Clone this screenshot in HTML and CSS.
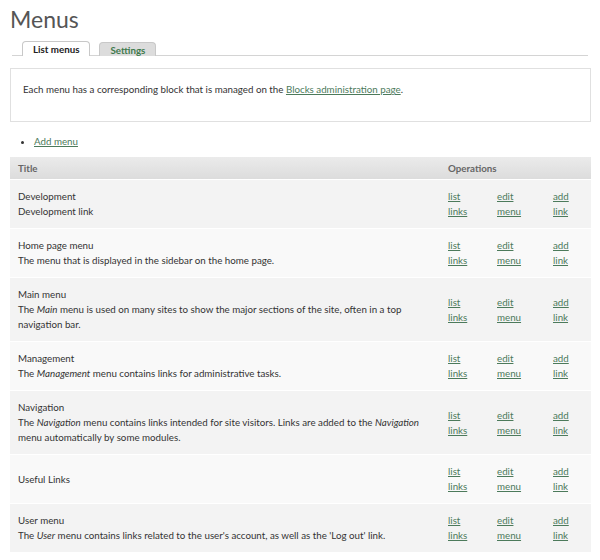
FILE: index.html
```html
<!DOCTYPE html>
<html>
<head>
<meta charset="utf-8">
<link rel="stylesheet" href="styles.css">
</head>
<body>
<div class="page">
  <h1 class="title">Menus</h1>
  <ul class="tabs">
    <li class="tab active">List menus</li>
    <li class="tab">Settings</li>
  </ul>
  <div class="help">
    <p>Each menu has a corresponding block that is managed on the <a href="#">Blocks administration page</a>.</p>
  </div>
  <ul class="actions">
    <li><a href="#">Add menu</a></li>
  </ul>
  <table class="menus">
    <thead>
      <tr><th class="t-title">Title</th><th colspan="3" class="t-ops">Operations</th></tr>
    </thead>
    <tbody>
      <tr class="odd"><td class="name">Development<br>Development link</td><td class="op c1"><a href="#">list links</a></td><td class="op c2"><a href="#">edit menu</a></td><td class="op c3"><a href="#">add link</a></td></tr>
      <tr class="even"><td class="name">Home page menu<br>The menu that is displayed in the sidebar on the home page.</td><td class="op c1"><a href="#">list links</a></td><td class="op c2"><a href="#">edit menu</a></td><td class="op c3"><a href="#">add link</a></td></tr>
      <tr class="odd"><td class="name">Main menu<br>The <em>Main</em> menu is used on many sites to show the major sections of the site, often in a top navigation bar.</td><td class="op c1"><a href="#">list links</a></td><td class="op c2"><a href="#">edit menu</a></td><td class="op c3"><a href="#">add link</a></td></tr>
      <tr class="even"><td class="name">Management<br>The <em>Management</em> menu contains links for administrative tasks.</td><td class="op c1"><a href="#">list links</a></td><td class="op c2"><a href="#">edit menu</a></td><td class="op c3"><a href="#">add link</a></td></tr>
      <tr class="odd"><td class="name">Navigation<br>The <em>Navigation</em> menu contains links intended for site visitors. Links are added to the <em>Navigation</em> menu automatically by some modules.</td><td class="op c1"><a href="#">list links</a></td><td class="op c2"><a href="#">edit menu</a></td><td class="op c3"><a href="#">add link</a></td></tr>
      <tr class="even"><td class="name">Useful Links</td><td class="op c1"><a href="#">list links</a></td><td class="op c2"><a href="#">edit menu</a></td><td class="op c3"><a href="#">add link</a></td></tr>
      <tr class="odd"><td class="name">User menu<br>The <em>User</em> menu contains links related to the user's account, as well as the 'Log out' link.</td><td class="op c1"><a href="#">list links</a></td><td class="op c2"><a href="#">edit menu</a></td><td class="op c3"><a href="#">add link</a></td></tr>
    </tbody>
  </table>
</div>
</body>
</html>
```
FILE: styles.css
```css
html, body {
  margin: 0;
  padding: 0;
  background: #fff;
}
body {
  font-family: Lato, "Liberation Sans", sans-serif;
  font-size: 9.75px;
  color: #333;
}
.page {
  padding: 6px 9px 0 10px;
}
.title {
  margin: 0;
  font-size: 23px;
  font-weight: 400;
  color: #555;
  line-height: 26px;
}
.tabs {
  list-style: none;
  margin: 9px 3px 0 2px;
  padding: 0 0 0 10px;
  display: flex;
  gap: 9px;
  border-bottom: 1px solid #d4d4d4;
  height: 14px;
  align-items: flex-end;
}
.tab {
  box-sizing: border-box;
  height: 14px;
  padding: 0 10px;
  font-weight: 700;
  font-size: 9.75px;
  line-height: 14px;
  border: 1px solid #c8c8c8;
  border-bottom: none;
  border-radius: 4px 4px 0 0;
  background: #dcdcdc;
  color: #3f7a4c;
  margin-bottom: -1px;
}
.tab.active {
  background: #fff;
  color: #222;
  height: 15px;
  padding: 0 10px;
}
.help {
  margin-top: 12px;
  border: 1px solid #e0e0e0;
  padding: 13px 12px 12px;
  height: 27px;
}
.help p {
  margin: 0;
  line-height: 14px;
}
a {
  color: #4c7a5b;
  text-decoration: underline;
}
.actions {
  margin: 12px 0 0;
  padding: 0 0 0 24px;
  list-style: disc;
  line-height: 14px;
}
.menus {
  margin-top: 9px;
  width: 100%;
  border-collapse: collapse;
  border-spacing: 0;
}
.menus th {
  text-align: left;
  font-weight: 700;
  color: #666;
  height: 22px;
  padding: 0 8px;
  background: linear-gradient(#ebebeb, #dcdcdc);
}
.menus td {
  line-height: 15px;
  vertical-align: middle;
  border-top: 1px solid #fff;
}
.menus tr.odd td { background: #f3f3f3; }
.menus tr.even td { background: #f9f9f9; }
.menus td.name {
  padding: 9px 8px 9px;
  height: 30px;
}
.menus td.op {
  padding: 9px 0 9px 8px;
}
.menus td.op a {
  display: inline-block;
  width: 26px;
}
.c1 { width: 41px; }
.c2 { width: 48px; }
.c3 { width: 38px; }
```
